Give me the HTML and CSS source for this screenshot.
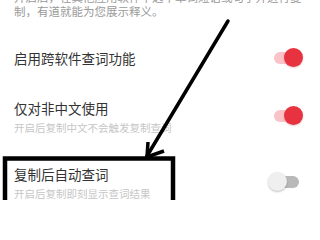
FILE: index.html
```html
<!DOCTYPE html>
<html lang="zh-CN">
<head>
<meta charset="utf-8">
<link rel="stylesheet" href="styles.css">
</head>
<body>
<div class="page">
  <p class="intro">开启后，在其他应用软件中选中单词短语或句子并进行复制，有道就能为您展示释义。</p>

  <div class="row">
    <div class="text">
      <div class="title">启用跨软件查词功能</div>
    </div>
    <span class="switch on"><span class="track"></span><span class="knob"></span></span>
  </div>

  <div class="row">
    <div class="text">
      <div class="title">仅对非中文使用</div>
      <div class="sub">开启后复制中文不会触发复制查词</div>
    </div>
    <span class="switch on"><span class="track"></span><span class="knob"></span></span>
  </div>

  <div class="row">
    <div class="text">
      <div class="title">复制后自动查词</div>
      <div class="sub">开启后复制即刻显示查词结果</div>
    </div>
    <span class="switch"><span class="track"></span><span class="knob"></span></span>
  </div>

  <svg class="annot" width="320" height="200" viewBox="0 0 320 200" xmlns="http://www.w3.org/2000/svg">
    <line x1="228" y1="21" x2="147" y2="156" stroke="#000" stroke-width="3.5" stroke-linecap="round"/>
    <polyline points="148,142 147,157 164,151" fill="none" stroke="#000" stroke-width="3.5" stroke-linejoin="miter"/>
    <rect x="5" y="158.5" width="168" height="60" fill="none" stroke="#000" stroke-width="4.5"/>
  </svg>
</div>
</body>
</html>
```

FILE: styles.css
```css
html, body {
  margin: 0;
  padding: 0;
  background: #ffffff;
}

body {
  font-family: "Noto Sans CJK SC", "Noto Sans", sans-serif;
  overflow: hidden;
}

.page {
  position: relative;
  width: 320px;
  height: 200px;
  overflow: hidden;
}

.intro {
  margin: -10px 0 0;
  padding: 0 14px 14.5px;
  font-size: 11.5px;
  line-height: 14px;
  color: #9a9a9a;
}

.row {
  display: flex;
  align-items: flex-start;
  justify-content: space-between;
  padding: 14px 17px 14px 14px;
}

.text {
  display: flex;
  flex-direction: column;
}

.title {
  font-size: 13.5px;
  line-height: 22px;
  color: #333333;
}

.sub {
  margin-top: 2px;
  font-size: 10.5px;
  line-height: 14px;
  color: #c6c6c6;
}

.switch {
  position: relative;
  align-self: center;
  width: 36px;
  height: 20px;
  flex: none;
}

.track {
  position: absolute;
  left: 7px;
  right: 4px;
  top: 4px;
  height: 12px;
  border-radius: 6px;
  background: #b9b9b9;
}

.knob {
  position: absolute;
  left: 1px;
  top: 0.5px;
  width: 19px;
  height: 19px;
  border-radius: 50%;
  background: #efefef;
  box-shadow: 0 1px 2px rgba(0, 0, 0, 0.25);
}

.switch.on .track {
  background: #f9c3c8;
}

.switch.on .knob {
  left: auto;
  right: 0;
  background: #e7323f;
  box-shadow: 0 1px 2px rgba(120, 0, 0, 0.2);
}

.annot {
  position: absolute;
  left: 0;
  top: 0;
  pointer-events: none;
}
```
